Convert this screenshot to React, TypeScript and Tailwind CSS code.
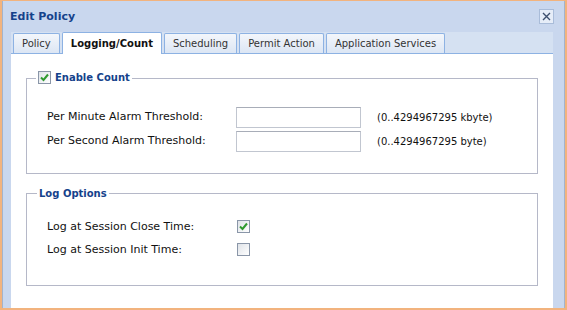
import React from "react";

function Check({ checked }: { checked: boolean }) {
  return (
    <span className="inline-flex h-[13px] w-[13px] items-center justify-center border border-[#8a96a8] bg-gradient-to-br from-[#dfe3e8] to-white">
      {checked && (
        <svg width="9" height="9" viewBox="0 0 9 9">
          <path d="M1 4.5 L3.5 7 L8 1.5" fill="none" stroke="#2f9a2f" strokeWidth="2" />
        </svg>
      )}
    </span>
  );
}

const tabs = ["Policy", "Logging/Count", "Scheduling", "Permit Action", "Application Services"];

export default function App() {
  return (
    <div
      className="flex h-[310px] w-[567px] bg-[#f2b37e] pt-px pb-[2px] pl-[2px] pr-[2px] text-[10px] text-[#111]"
      style={{ fontFamily: '"DejaVu Sans", Verdana, sans-serif' }}
    >
      <div className="flex flex-1 flex-col border-x border-[#a3b3cc] bg-[#c9d7ee] pl-[8px] pr-[11px]">
        <div className="flex h-[31px] items-center justify-between pt-px">
          <span className="-ml-[1px] text-[11px] font-bold text-[#15428b]">Edit Policy</span>
          <span className="mb-[1px] -mr-[1px] flex h-[15px] w-[15px] items-center justify-center border border-[#a9bcd9] bg-[#e6edf8]">
            <svg width="9" height="9" viewBox="0 0 9 9">
              <path d="M1 1 L8 8 M8 1 L1 8" stroke="#3d4f6e" strokeWidth="1.4" />
            </svg>
          </span>
        </div>
        <div className="flex flex-1 flex-col">
          <div className="flex h-[22px] items-end gap-[2px] border-b border-[#8db2e3] bg-[#d5e1f2] pl-[2px]">
            {tabs.map((t, i) =>
              i === 1 ? (
                <div
                  key={t}
                  className="-mb-px flex h-[22px] items-center rounded-t-[2px] border border-b-0 border-[#8db2e3] bg-white px-[8px] font-bold text-[#111]"
                >
                  {t}
                </div>
              ) : (
                <div
                  key={t}
                  className="flex h-[20px] items-center rounded-t-[2px] border border-b-0 border-[#8db2e3] bg-gradient-to-b from-[#f3f6fb] to-[#dce6f4] px-[8px] text-[#333]"
                >
                  {t}
                </div>
              )
            )}
          </div>
          <div className="flex flex-1 flex-col bg-white px-[15px] pt-[16px]">
            <fieldset className="h-[104px] border border-[#b5b8c8] pl-[20px] pr-[10px]">
              <legend className="-ml-[11px] px-[2px] font-bold text-[#15428b]">
                <span className="inline-flex items-center gap-[4px]">
                  <Check checked />
                  <span>Enable Count</span>
                </span>
              </legend>
              <div className="mt-[21px] flex flex-col gap-[3px]">
                <div className="flex items-center">
                  <span className="w-[189px] text-[11px]">Per Minute Alarm Threshold:</span>
                  <span className="h-[21px] w-[125px] border border-[#c1c6d0] border-t-[#a8adb8] bg-white" />
                  <span className="ml-[16px]">(0..4294967295 kbyte)</span>
                </div>
                <div className="flex items-center">
                  <span className="w-[189px] text-[11px]">Per Second Alarm Threshold:</span>
                  <span className="h-[21px] w-[125px] border border-[#c1c6d0] border-t-[#a8adb8] bg-white" />
                  <span className="ml-[16px]">(0..4294967295 byte)</span>
                </div>
              </div>
            </fieldset>
            <fieldset className="mt-[12px] h-[100px] border border-[#b5b8c8] pl-[20px] pr-[10px]">
              <legend className="-ml-[10px] px-[2px] font-bold text-[#15428b]">Log Options</legend>
              <div className="mt-[18px] flex flex-col gap-[8px] text-[11px] leading-[15px]">
                <div className="flex items-center">
                  <span className="w-[190px]">Log at Session Close Time:</span>
                  <Check checked />
                </div>
                <div className="flex items-center">
                  <span className="w-[190px]">Log at Session Init Time:</span>
                  <Check checked={false} />
                </div>
              </div>
            </fieldset>
          </div>
        </div>
      </div>
    </div>
  );
}
